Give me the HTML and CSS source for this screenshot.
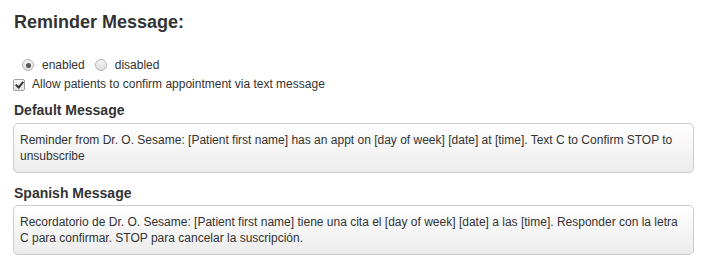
FILE: index.html
```html
<!DOCTYPE html>
<html lang="en">
<head>
<meta charset="utf-8">
<title>Reminder Message</title>
<link rel="stylesheet" href="styles.css">
</head>
<body>
<div class="panel">
  <h3 class="title">Reminder Message:</h3>
  <div class="radio-row">
    <label class="opt"><input type="radio" name="rem" class="radio" checked> enabled</label>
    <label class="opt"><input type="radio" name="rem" class="radio"> disabled</label>
  </div>
  <label class="check-row"><input type="checkbox" class="check" checked> Allow patients to confirm appointment via text message</label>
  <div class="field-label">Default Message</div>
  <div class="msg-box">Reminder from Dr. O. Sesame: [Patient first name] has an appt on [day of week] [date] at [time]. Text C to Confirm STOP to unsubscribe</div>
  <div class="field-label second">Spanish Message</div>
  <div class="msg-box">Recordatorio de Dr. O. Sesame: [Patient first name] tiene una cita el [day of week] [date] a las [time]. Responder con la letra C para confirmar. STOP para cancelar la suscripción.</div>
</div>
</body>
</html>
```

FILE: styles.css
```css
html, body {
  margin: 0;
  padding: 0;
  background: #ffffff;
}

body {
  font-family: "Liberation Sans", Arial, sans-serif;
  font-size: 12px;
  line-height: 16px;
  color: #333333;
}

.panel {
  display: flex;
  flex-direction: column;
  padding: 0 22px 0 13px;
}

.title {
  margin: 11px 0 0 1px;
  font-size: 18px;
  line-height: 22px;
  font-weight: bold;
  color: #333333;
}

.radio-row {
  display: flex;
  align-items: center;
  gap: 10px;
  margin: 24px 0 0 9px;
  height: 16px;
}

.opt {
  display: flex;
  align-items: center;
  gap: 8px;
}

.radio {
  appearance: none;
  -webkit-appearance: none;
  margin: 0;
  width: 12px;
  height: 12px;
  border-radius: 50%;
  border: 1px solid #b4b4b4;
  background: linear-gradient(#f4f4f4, #dedede);
  box-sizing: border-box;
  position: relative;
}

.radio:checked::after {
  content: "";
  position: absolute;
  left: 2.5px;
  top: 2.5px;
  width: 5px;
  height: 5px;
  border-radius: 50%;
  background: #555555;
}

.check-row {
  display: flex;
  align-items: center;
  gap: 7px;
  margin: 3px 0 0 0;
  height: 16px;
}

.check {
  appearance: none;
  -webkit-appearance: none;
  margin: 1px 0 0 0;
  width: 12px;
  height: 12px;
  border: 1px solid #a0a0a0;
  border-radius: 2px;
  background: linear-gradient(#f8f8f8, #e2e2e2);
  box-sizing: border-box;
  position: relative;
}

.check:checked::after {
  content: "";
  position: absolute;
  left: 3px;
  top: 0px;
  width: 3px;
  height: 6px;
  border: solid #333333;
  border-width: 0 2px 2px 0;
  transform: rotate(40deg);
}

.field-label {
  margin: 8px 0 3px 1px;
  font-size: 14px;
  line-height: 20px;
  font-weight: bold;
  color: #333333;
}

.field-label.second {
  margin-top: 10px;
  margin-bottom: 2px;
}

.msg-box {
  border: 1px solid #cccccc;
  border-radius: 5px;
  background: linear-gradient(#ffffff, #ececec);
  padding: 8px 6px;
  min-height: 32px;
  color: #333333;
}
```
